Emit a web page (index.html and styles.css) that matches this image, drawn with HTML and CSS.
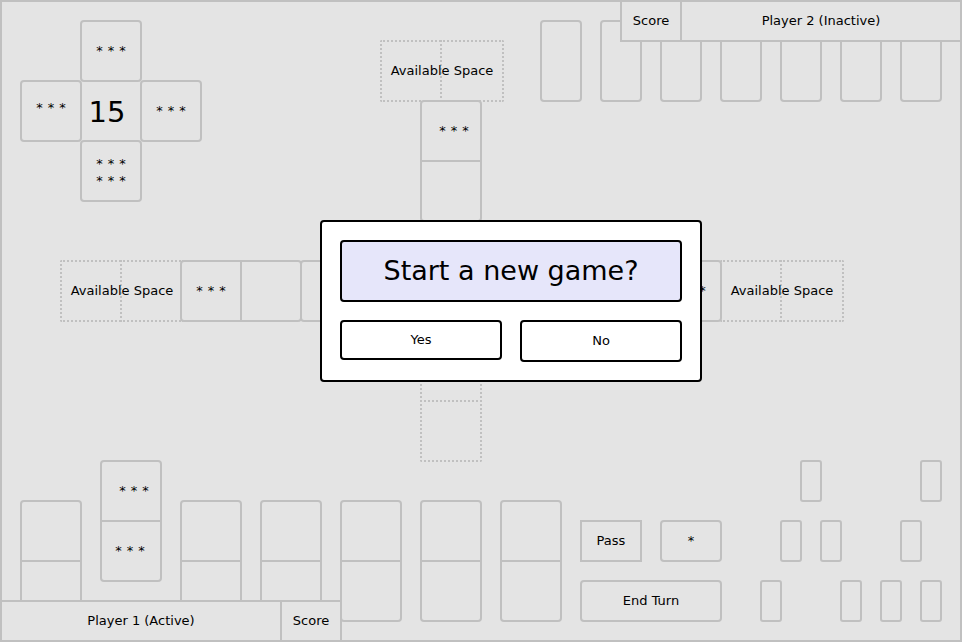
FILE: index.html
```html
<!DOCTYPE html>
<html>
<head>
<meta charset="utf-8">
<title>Dominoes</title>
<link rel="stylesheet" href="styles.css">
</head>
<body>
<div class="board">

  <!-- opponent hand (face down) -->
  <div class="opp-hand">
    <div class="back"></div><div class="back"></div><div class="back"></div><div class="back"></div>
    <div class="back"></div><div class="back"></div><div class="back"></div>
  </div>

  <div class="bar bar-top">
    <div class="bar-cell bar-score">Score</div>
    <div class="bar-cell bar-name">Player 2 (Inactive)</div>
  </div>

  <!-- score cross -->
  <div class="cross">
    <div class="tile cross-tile c-top"><span class="pips">***</span></div>
    <div class="tile cross-tile c-left"><span class="pips up">***</span></div>
    <div class="c-center">15</div>
    <div class="tile cross-tile c-right"><span class="pips">***</span></div>
    <div class="tile cross-tile c-bottom"><span class="pips two">***<br>***</span></div>
  </div>

  <!-- table: vertical line -->
  <div class="avail avail-h spot-top"><span>Available Space</span></div>
  <div class="domino v spot-v1"><div class="half"><span class="pips sh-r">***</span></div><div class="half second"></div></div>
  <div class="domino v spot-v2"><div class="half"></div><div class="half second"></div></div>
  <div class="avail avail-v spot-bottom"></div>

  <!-- table: horizontal line -->
  <div class="avail avail-h spot-left"><span>Available Space</span></div>
  <div class="domino h spot-h1"><div class="half"><span class="pips">***</span></div><div class="half second"></div></div>
  <div class="domino h spot-h2"><div class="half"></div><div class="half second"></div></div>
  <div class="domino h spot-h3"><div class="half"></div><div class="half second"></div></div>
  <div class="domino h spot-h4"><div class="half"></div><div class="half second"><span class="pips">***</span></div></div>
  <div class="avail avail-h spot-right"><span>Available Space</span></div>

  <!-- boneyard -->
  <div class="bone" style="left:800px;top:460px"></div>
  <div class="bone" style="left:920px;top:460px"></div>
  <div class="bone" style="left:780px;top:520px"></div>
  <div class="bone" style="left:820px;top:520px"></div>
  <div class="bone" style="left:900px;top:520px"></div>
  <div class="bone" style="left:760px;top:580px"></div>
  <div class="bone" style="left:840px;top:580px"></div>
  <div class="bone" style="left:880px;top:580px"></div>
  <div class="bone" style="left:920px;top:580px"></div>

  <!-- player hand -->
  <div class="my-hand">
    <div class="domino v"><div class="half"></div><div class="half second"></div></div>
    <div class="domino v raised"><div class="half"><span class="pips sh-r">***</span></div><div class="half second"><span class="pips sh-l">***</span></div></div>
    <div class="domino v"><div class="half"></div><div class="half second"></div></div>
    <div class="domino v"><div class="half"></div><div class="half second"></div></div>
    <div class="domino v"><div class="half"></div><div class="half second"></div></div>
    <div class="domino v"><div class="half"></div><div class="half second"></div></div>
    <div class="domino v"><div class="half"></div><div class="half second"></div></div>
  </div>

  <div class="controls">
    <div class="ctl ctl-pass">Pass</div>
    <div class="ctl ctl-star">*</div>
    <div class="ctl ctl-end">End Turn</div>
  </div>

  <div class="bar bar-bottom">
    <div class="bar-cell bar-name">Player 1 (Active)</div>
    <div class="bar-cell bar-score">Score</div>
  </div>

  <!-- modal -->
  <div class="dialog">
    <div class="dialog-title">Start a new game?</div>
    <div class="dialog-buttons">
      <div class="btn btn-yes">Yes</div>
      <div class="btn btn-no">No</div>
    </div>
  </div>

</div>
</body>
</html>
```
FILE: styles.css
```css
* { box-sizing: border-box; }

body {
  margin: 0;
  background: #e4e4e4;
}

.board {
  position: relative;
  width: 962px;
  height: 642px;
  background: #e4e4e4;
  box-shadow: inset 0 0 0 2px #c0c0c0;
  font-family: "DejaVu Sans", "Liberation Sans", sans-serif;
  font-size: 13px;
  color: #000;
  overflow: hidden;
}

/* generic tiles */
.tile {
  border: 2px solid #c0c0c0;
  border-radius: 4px;
  display: flex;
  align-items: center;
  justify-content: center;
}

.pips {
  letter-spacing: 5px;
  padding-left: 5px;
  line-height: 16px;
  text-align: center;
}
.pips.up { margin-bottom: 6px; }
.pips.two { line-height: 17px; margin-top: 2px; }
.pips.sh-r { margin-left: 6px; }
.pips.sh-l { margin-right: 2px; }

/* score cross */
.cross {
  position: absolute;
  left: 20px;
  top: 20px;
  display: grid;
  grid-template-columns: repeat(3, 60px);
  grid-template-rows: repeat(3, 60px);
}
.cross-tile { width: 62px; height: 62px; }
.c-top { grid-column: 2; grid-row: 1; }
.c-left { grid-column: 1; grid-row: 2; }
.c-right { grid-column: 3; grid-row: 2; }
.c-bottom { grid-column: 2; grid-row: 3; }
.c-center {
  grid-column: 2;
  grid-row: 2;
  width: 62px;
  height: 62px;
  display: flex;
  align-items: center;
  justify-content: center;
  font-size: 29px;
  padding-right: 8px;
  padding-top: 1px;
}

/* dominoes */
.domino {
  border: 2px solid #c0c0c0;
  border-radius: 4px;
  display: flex;
  background: #e4e4e4;
}
.domino.v { flex-direction: column; width: 62px; height: 122px; }
.domino.h { flex-direction: row; width: 122px; height: 62px; }
.half {
  display: flex;
  align-items: center;
  justify-content: center;
}
.domino.v .half { width: 100%; height: 58px; }
.domino.v .half.second { height: 60px; border-top: 2px solid #c0c0c0; }
.domino.h .half { height: 100%; width: 58px; }
.domino.h .half.second { width: 60px; border-left: 2px solid #c0c0c0; }

/* available spaces */
.avail {
  position: absolute;
  border: 2px dotted #c0c0c0;
  border-radius: 2px;
  display: flex;
  align-items: center;
  justify-content: center;
  white-space: nowrap;
  padding-bottom: 2px;
}
.avail-h { width: 124px; height: 62px; }
.avail-h::before {
  content: "";
  position: absolute;
  left: 58px;
  top: -2px;
  bottom: -2px;
  border-left: 2px dotted #c0c0c0;
}
.avail-v { width: 62px; height: 122px; }
.avail-v::before {
  content: "";
  position: absolute;
  top: 58px;
  left: -2px;
  right: -2px;
  border-top: 2px dotted #c0c0c0;
}
.avail span { position: relative; }

.spot-top { left: 380px; top: 40px; }
.spot-left { left: 60px; top: 260px; }
.spot-right { left: 720px; top: 260px; }
.spot-bottom { left: 420px; top: 340px; }

.spot-v1 { position: absolute; left: 420px; top: 100px; }
.spot-v2 { position: absolute; left: 420px; top: 220px; }
.spot-h1 { position: absolute; left: 180px; top: 260px; }
.spot-h2 { position: absolute; left: 300px; top: 260px; }
.spot-h3 { position: absolute; left: 480px; top: 260px; }
.spot-h4 { position: absolute; left: 600px; top: 260px; }

/* opponent hand */
.opp-hand {
  position: absolute;
  left: 540px;
  top: 20px;
  display: flex;
  gap: 18px;
}
.back {
  width: 42px;
  height: 82px;
  border: 2px solid #c0c0c0;
  border-radius: 4px;
}

/* boneyard */
.bone {
  position: absolute;
  width: 22px;
  height: 42px;
  border: 2px solid #c0c0c0;
  border-radius: 3px;
}

/* player hand */
.my-hand {
  position: absolute;
  left: 20px;
  top: 460px;
  height: 162px;
  display: flex;
  align-items: flex-end;
  gap: 18px;
}
.my-hand .raised { margin-bottom: 40px; }

/* name bars */
.bar {
  position: absolute;
  display: flex;
}
.bar-top { left: 620px; top: 0; }
.bar-bottom { left: 0; top: 600px; }
.bar-cell {
  height: 42px;
  border: 2px solid #c0c0c0;
  background: #e4e4e4;
  display: flex;
  align-items: center;
  justify-content: center;
  padding-bottom: 2px;
}
.bar-score { width: 62px; }
.bar-name { width: 282px; }
.bar-top .bar-name { margin-left: -2px; }
.bar-bottom .bar-score { margin-left: -2px; }

/* controls */
.controls {
  position: absolute;
  left: 580px;
  top: 520px;
  display: grid;
  grid-template-columns: 62px 62px;
  grid-template-rows: 42px 42px;
  gap: 18px;
}
.ctl {
  border: 2px solid #c0c0c0;
  border-radius: 4px;
  display: flex;
  align-items: center;
  justify-content: center;
  padding-bottom: 2px;
}
.ctl-pass { border-radius: 0; }
.ctl-end { grid-column: 1 / 3; }

/* dialog */
.dialog {
  position: absolute;
  left: 320px;
  top: 220px;
  width: 382px;
  height: 162px;
  background: #fff;
  border: 2px solid #000;
  border-radius: 4px;
  padding: 18px;
  display: flex;
  flex-direction: column;
  gap: 18px;
}
.dialog-title {
  height: 62px;
  background: #e6e6fa;
  border: 2px solid #000;
  border-radius: 4px;
  display: flex;
  align-items: center;
  justify-content: center;
  font-size: 27px;
  padding-bottom: 2px;
}
.dialog-buttons {
  display: flex;
  align-items: flex-start;
  gap: 18px;
}
.btn {
  width: 162px;
  height: 42px;
  border: 2px solid #000;
  border-radius: 4px;
  background: #fff;
  display: flex;
  align-items: center;
  justify-content: center;
  padding-bottom: 2px;
}
.btn-yes { height: 40px; }
```
